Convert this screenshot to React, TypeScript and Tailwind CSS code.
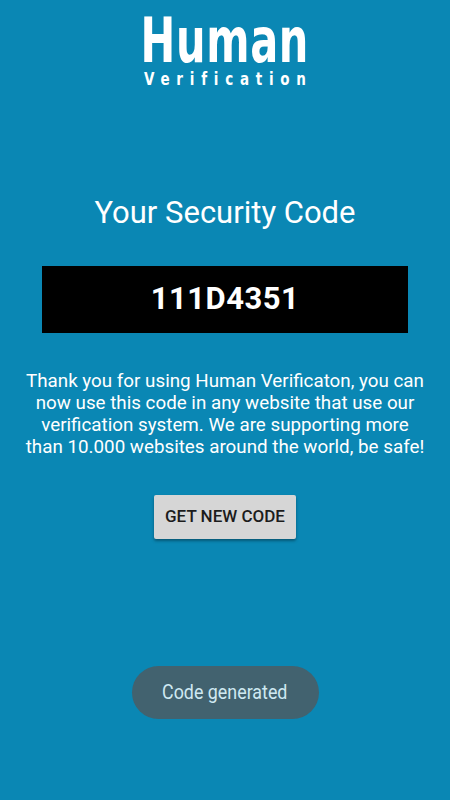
export default function App() {
  return (
    <div className="flex h-[800px] w-[450px] flex-col items-center bg-[#0a87b4] font-['Roboto','Liberation_Sans',sans-serif] text-white">
      {/* logo: no condensed face installed, so squeeze it */}
      <div className="mt-[13px] flex flex-col items-center font-['DejaVu_Sans',sans-serif] font-bold">
        <div className="scale-x-[0.67] text-[62px] leading-[56px] tracking-[1px]">Human</div>
        <div className="scale-x-[0.75] pl-[9px] text-[18px] leading-[20px] tracking-[9px]">Verification</div>
      </div>

      <h1 className="mt-[104px] text-[31px] leading-[40px]">Your Security Code</h1>

      <div className="mt-[33px] flex h-[67px] w-[366px] items-center justify-center bg-black">
        <span className="text-[31px] font-bold tracking-[0.5px]">111D4351</span>
      </div>

      <p className="mt-[37px] w-[404px] text-center text-[18.8px] leading-[22px]">
        Thank you for using Human Verificaton, you can now use this code in any website that use our verification system. We are supporting more than 10.000 websites around the world, be safe!
      </p>

      <button className="mt-[37px] h-[44px] rounded-[2px] bg-[#d6d6d6] px-[11px] text-[17px] font-medium text-[#1c1c1c] shadow-[0_2px_3px_rgba(0,0,0,0.35)]">
        GET NEW CODE
      </button>

      <div className="mt-[127px] flex h-[53px] w-[187px] items-center justify-center rounded-full bg-[#42626f] text-[#cfe9f2]">
        <span className="scale-x-[0.85] text-[21px]">Code generated</span>
      </div>
    </div>
  )
}
